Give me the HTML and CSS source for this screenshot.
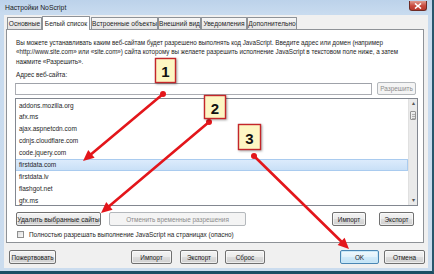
FILE: index.html
```html
<!DOCTYPE html>
<html lang="ru">
<head>
<meta charset="utf-8">
<title>Настройки NoScript</title>
<link rel="stylesheet" href="styles.css">
</head>
<body>
<div class="window">
  <div class="titlebar">
    <span class="title">Настройки NoScript</span>
    <span class="close"><svg width="8" height="6" viewBox="0 0 8 6"><path d="M1 0.5 L7 5.5 M7 0.5 L1 5.5" stroke="#fff" stroke-width="1.6"/></svg></span>
  </div>
  <div class="client">
    <div class="tabs">
      <div class="tab t1">Основные</div>
      <div class="tab t2 active">Белый список</div>
      <div class="tab t3">Встроенные объекты</div>
      <div class="tab t4">Внешний вид</div>
      <div class="tab t5">Уведомления</div>
      <div class="tab t6">Дополнительно</div>
    </div>
    <div class="panel">
      <p class="desc">Вы можете устанавливать каким веб-сайтам будет разрешено выполнять код JavaScript. Введите адрес или домен (например<br>«http://www.site.com» или «site.com») сайта которому вы желаете разрешить исполнение JavaScript в текстовом поле ниже, а затем<br>нажмите «Разрешить».</p>
      <div class="label">Адрес веб-сайта:</div>
      <div class="addrow">
        <div class="input"></div>
        <div class="btn disabled allow">Разрешить</div>
      </div>
      <div class="list">
        <div class="items">
          <div class="item">addons.mozilla.org</div>
          <div class="item">afx.ms</div>
          <div class="item">ajax.aspnetcdn.com</div>
          <div class="item">cdnjs.cloudflare.com</div>
          <div class="item">code.jquery.com</div>
          <div class="item selected">firstdata.com</div>
          <div class="item">firstdata.lv</div>
          <div class="item">flashgot.net</div>
          <div class="item">gfx.ms</div>
        </div>
        <div class="scrollbar">
          <div class="sb-arrow">▴</div>
          <div class="sb-track"><div class="sb-thumb"></div></div>
          <div class="sb-arrow">▾</div>
        </div>
      </div>
      <div class="actions">
        <div class="btn remove">Удалить выбранные сайты</div>
        <div class="btn disabled revoke">Отменить временные разрешения</div>
        <div class="spacer"></div>
        <div class="btn imp">Импорт</div>
        <div class="btn exp">Экспорт</div>
      </div>
      <div class="check"><span class="box"></span><span class="check-text">Полностью разрешать выполнение JavaScript на страницах (опасно)</span></div>
    </div>
    <div class="footer">
      <div class="btn donate">Пожертвовать</div>
      <div class="btn fimp">Импорт</div>
      <div class="btn fexp">Экспорт</div>
      <div class="btn reset">Сброс</div>
      <div class="spacer"></div>
      <div class="btn ok">OK</div>
      <div class="btn cancel">Отмена</div>
    </div>
  </div>
  <svg class="annot" width="434" height="274" viewBox="0 0 434 274">
    <g stroke="#e3161b" stroke-width="2.6" stroke-linecap="round" fill="none">
      <line x1="163" y1="94" x2="91.4" y2="153.9"/>
      <line x1="209" y1="122" x2="109.4" y2="205.9"/>
      <line x1="254" y1="156" x2="341.1" y2="241.3"/>
    </g>
    <g fill="#e3161b">
      <polygon points="83,161 88.2,150.1 94.6,157.8"/>
      <polygon points="101,213 106.2,202.1 112.6,209.7"/>
      <polygon points="349,249 337.6,244.9 344.6,237.7"/>
      <circle cx="163" cy="94" r="3"/>
      <circle cx="209" cy="122" r="3"/>
      <circle cx="254" cy="156" r="3"/>
    </g>
    <g class="callout">
      <rect x="155.5" y="58.5" width="20" height="24" class="cbox"/>
      <text x="165.5" y="77">1</text>
      <rect x="204.5" y="95.5" width="21" height="23" class="cbox"/>
      <text x="215" y="113.5">2</text>
      <rect x="238.5" y="124.5" width="22" height="25" class="cbox"/>
      <text x="249.5" y="144">3</text>
    </g>
  </svg>
</div>
</body>
</html>
```

FILE: styles.css
```css
* { box-sizing: border-box; }
html, body { margin: 0; padding: 0; }
body {
  width: 434px;
  height: 274px;
  overflow: hidden;
  font-family: "Liberation Sans", Arial, sans-serif;
  font-size: 6.6px;
  color: #1e1e1e;
}
.window {
  position: relative;
  width: 434px;
  height: 274px;
  background: linear-gradient(to bottom, #bcd2ea 0px, #c8dbef 14px, #cbdcee 100%);
  border-bottom: 3px solid #1d4e63;
  border-right: 2px solid #28566c;
}
.titlebar {
  height: 15px;
  display: flex;
  align-items: center;
  padding-left: 5px;
  position: relative;
}
.title { font-size: 6.8px; color: #1a1a1a; }
.close {
  position: absolute;
  right: 5px;
  top: 1px;
  width: 18px;
  height: 10px;
  border: 1px solid #6e2b25;
  border-top: none;
  border-radius: 0 0 3px 3px;
  background: linear-gradient(to bottom, #e09a8f, #c7493d 55%, #b83a2f);
  display: flex;
  align-items: center;
  justify-content: center;
}
.client {
  margin-left: 4px;
  width: 424px;
  height: 253px;
  background: #f0f0f0;
  padding: 2px 0 0 2px;
}
.tabs {
  display: flex;
  align-items: flex-end;
  height: 12px;
  padding-left: 1px;
  position: relative;
  z-index: 2;
}
.tab {
  height: 12px;
  border: 1px solid #8e9297;
  border-bottom: none;
  background: linear-gradient(to bottom, #f6f6f6, #e4e4e4);
  display: flex;
  align-items: center;
  justify-content: center;
  white-space: nowrap;
  font-size: 6.6px;
  border-radius: 1px 1px 0 0;
}
.t1 { width: 35px; }
.t2 { width: 48px; }
.t3 { width: 67px; margin-left: 1px; }
.t4 { width: 43px; }
.t5 { width: 46px; }
.t6 { width: 50px; }
.tab.active {
  height: 14px;
  margin-bottom: -1px;
  background: #fff;
  border-color: #8e9297;
}
.panel {
  width: 418px;
  height: 214px;
  background: #fff;
  border: 1px solid #8e9297;
  padding: 8px 0 0 9px;
  position: relative;
  z-index: 1;
}
.desc {
  margin: 0;
  line-height: 9.3px;
  height: 28px;
  white-space: nowrap;
  font-size: 6.3px;
  letter-spacing: -0.03px;
}
.label {
  margin-top: 4px;
  height: 10px;
  line-height: 10px;
  font-size: 6.4px;
}
.addrow {
  margin-top: 2px;
  display: flex;
  align-items: flex-end;
  height: 13px;
  margin-left: -1px;
}
.input {
  width: 357px;
  height: 12px;
  border: 1px solid #abadb3;
  border-top-color: #9fa2a9;
  background: #fff;
}
.btn {
  height: 14px;
  border: 1px solid #707070;
  border-radius: 2px;
  background: linear-gradient(to bottom, #f3f3f3 0%, #ebebeb 48%, #dddddd 52%, #cfcfcf 100%);
  box-shadow: inset 0 0 0 1px rgba(255,255,255,0.6);
  display: flex;
  align-items: center;
  justify-content: center;
  white-space: nowrap;
  font-size: 6.4px;
  color: #1a1a1a;
}
.btn.disabled {
  border-color: #b4b8bc;
  background: #f4f4f4;
  color: #8c8c8c;
  box-shadow: none;
}
.allow { width: 39px; height: 13px; margin-left: 5px; }
.list {
  margin-top: 3px;
  margin-left: -1px;
  width: 403px;
  height: 108px;
  border: 1px solid #828790;
  display: flex;
}
.items {
  flex: 1;
  padding-top: 0.5px;
}
.item {
  height: 11.9px;
  line-height: 11.9px;
  padding-left: 3px;
  font-size: 6.5px;
}
.item.selected {
  background: linear-gradient(to bottom, #dcebfc, #c9e0f7);
  border: 1px solid #a9cbef;
  border-left: none;
  line-height: 9.9px;
}
.scrollbar {
  width: 9px;
  display: flex;
  flex-direction: column;
  background: #eaeaea;
  border-left: 1px solid #e0e0e0;
}
.sb-arrow {
  height: 9px;
  font-size: 6px;
  line-height: 9px;
  text-align: center;
  color: #555;
}
.sb-track { flex: 1; padding-top: 3px; }
.sb-thumb {
  margin: 0 1px;
  height: 9px;
  border: 1px solid #959595;
  border-radius: 1px;
  background: repeating-linear-gradient(to bottom, #e8e8e8 0 1px, #b0b0b0 1px 2px);
  background-size: 3px 6px;
  background-position: center;
  background-repeat: no-repeat;
  background-color: #efefef;
}
.actions {
  margin-top: 6px;
  display: flex;
  height: 14px;
  width: 398px;
}
.remove { width: 85px; font-size: 6.6px; }
.revoke { width: 137px; margin-left: 8px; }
.spacer { flex: 1; }
.imp { width: 34px; }
.exp { width: 35px; margin-left: 13px; }
.check {
  margin-top: 3px;
  height: 10px;
  display: flex;
  align-items: center;
  gap: 5px;
  padding-left: 1px;
  white-space: nowrap;
}
.check-text { font-size: 6.4px; }
.box {
  width: 7px;
  height: 7px;
  border: 1px solid #8e8f8f;
  background: linear-gradient(135deg, #dcdcdc, #fafafa);
}
.footer {
  display: flex;
  padding: 7px 3px 0 3px;
  height: 25px;
}
.footer .btn { height: 14px; }
.donate { width: 47px; }
.fimp { width: 41px; margin-left: 75px; }
.fexp { width: 38px; margin-left: 8px; }
.reset { width: 40px; margin-left: 7px; }
.ok { width: 39px; border-color: #4a86b4; box-shadow: inset 0 0 0 1px #c8e8f8; background: linear-gradient(to bottom, #f0f8fd, #e2f2fb 48%, #d0eafa 52%, #c2e2f5); }
.cancel { width: 41px; margin-left: 5px; }
.annot {
  position: absolute;
  left: 0;
  top: 0;
  pointer-events: none;
  z-index: 5;
}
.cbox {
  fill: #fdf6c3;
  stroke: #c4262a;
  stroke-width: 1.4;
  filter: drop-shadow(1px 1px 1px rgba(0,0,0,0.35));
}
.callout text {
  font-family: "Liberation Sans", Arial, sans-serif;
  font-weight: bold;
  font-size: 15px;
  fill: #111;
  text-anchor: middle;
}
```
